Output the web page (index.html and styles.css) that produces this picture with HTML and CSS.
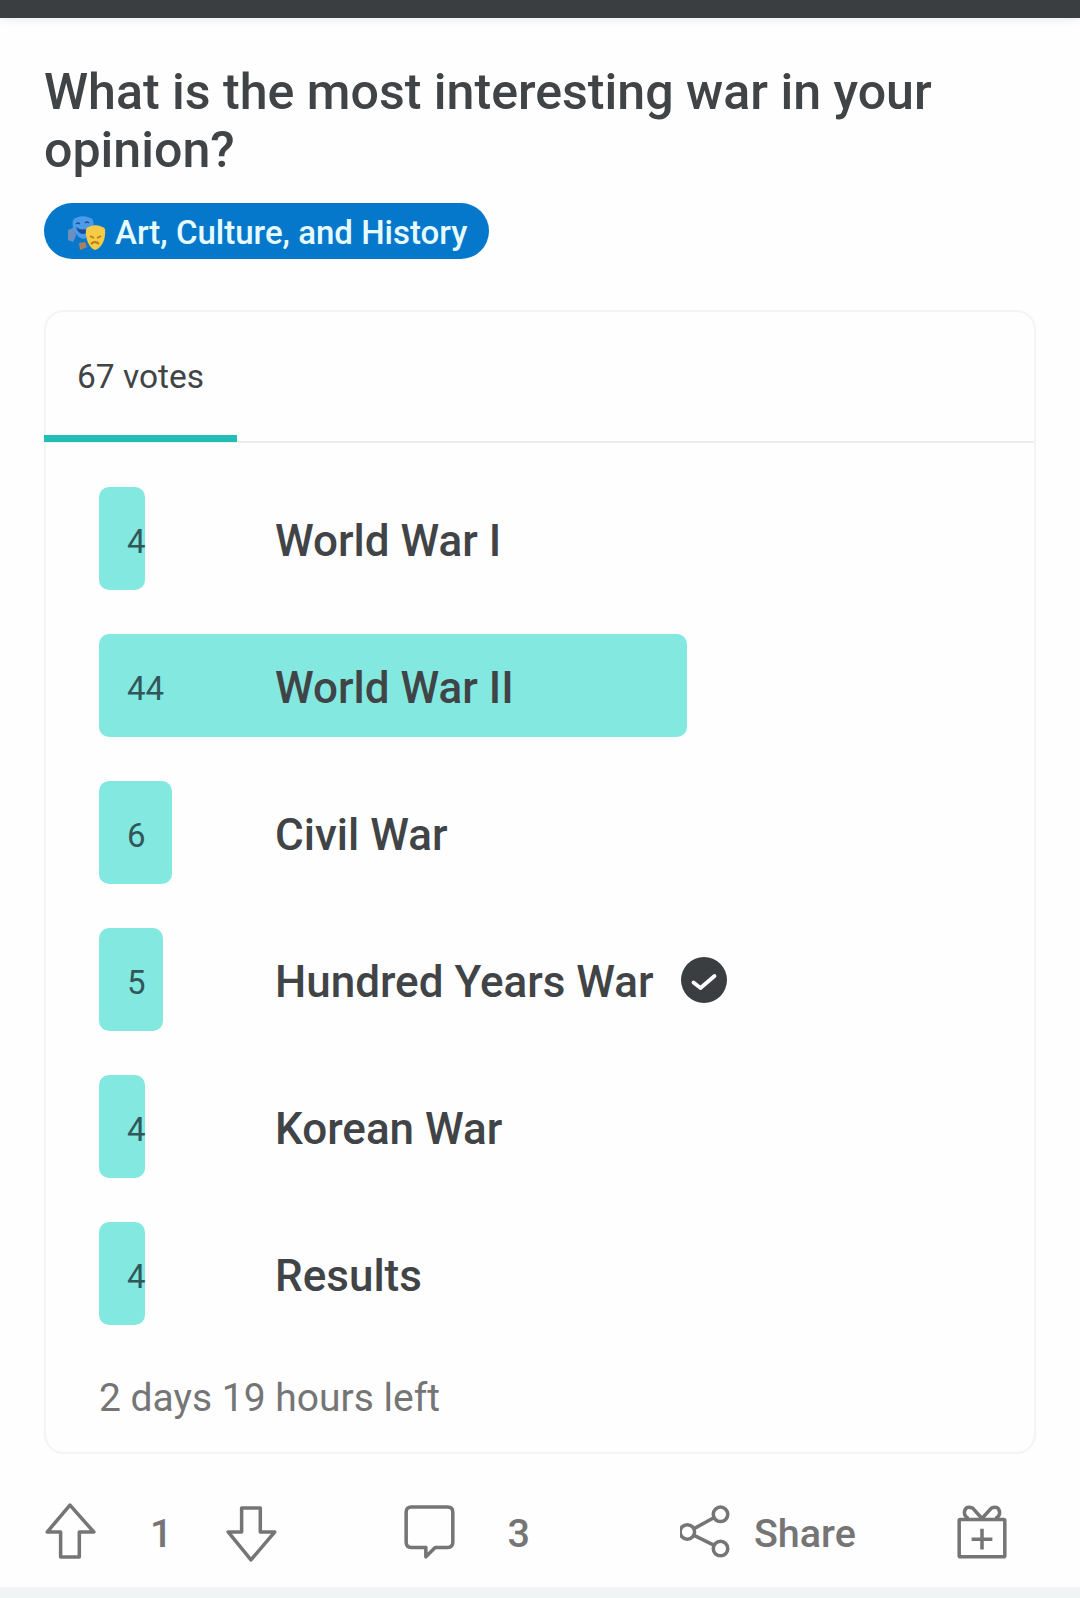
FILE: index.html
```html
<!DOCTYPE html>
<html lang="en">
<head>
    <meta charset="UTF-8">
    <meta name="viewport" content="width=device-width, initial-scale=1.0">
    <title>Poll</title>
    <link rel="stylesheet" href="styles.css">
</head>
<body>
    <div class="topBar"></div>
    <div class="content">
        <h1 class="title">What is the most interesting war in your opinion?</h1>
        <div class="topic">
            <svg class="topicIcon" viewBox="0 0 40 36" width="40" height="36">
                <path d="M1 15l7-3 1 9-3 6-5-2z" fill="#6d8fc0"/>
                <path d="M12 28l6-1 2 5-7 3z" fill="#a8825e"/>
                <path d="M6 5C11 0 21 0 26 5 28 13 24 22 16 24 9 22 4 13 6 5z" fill="#4c9be8"/>
                <path d="M9 9q2-2 4 0M18 8q2-2 4 0" fill="none" stroke="#1a4fa0" stroke-width="1.4"/>
                <path d="M9 12q7 5 14 0-1 7-7 7-5 0-7-7z" fill="#1a4fa0"/>
                <path d="M19 14C24 9 33 9 38 14 39 24 35 33 28 35 22 33 18 24 19 14z" fill="#f7cb45"/>
                <path d="M23 21l4 2M34 21l-4 2" stroke="#b07d18" stroke-width="1.5"/>
                <path d="M24 29q4-4 8 0" fill="none" stroke="#b07d18" stroke-width="1.8"/>
            </svg>
            <span class="topicText">Art, Culture, and History</span>
        </div>

        <div class="card">
            <div class="tabs">
                <div class="tab">67 votes</div>
            </div>
            <div class="options">
                <div class="option">
                    <div class="bar" style="width: 46px"></div>
                    <div class="count">4</div>
                    <div class="label">World War I</div>
                </div>
                <div class="option">
                    <div class="bar" style="width: 588px"></div>
                    <div class="count">44</div>
                    <div class="label">World War II</div>
                </div>
                <div class="option">
                    <div class="bar" style="width: 73px"></div>
                    <div class="count">6</div>
                    <div class="label">Civil War</div>
                </div>
                <div class="option">
                    <div class="bar" style="width: 64px"></div>
                    <div class="count">5</div>
                    <div class="label">Hundred Years War
                        <svg class="check" viewBox="0 0 46 46" width="46" height="46">
                            <circle cx="23" cy="23" r="23" fill="#3a3e41"/>
                            <path d="M12.5 25.5L19.5 31 33.5 19" fill="none" stroke="#fff" stroke-width="3.8" stroke-linecap="round" stroke-linejoin="round"/>
                        </svg>
                    </div>
                </div>
                <div class="option">
                    <div class="bar" style="width: 46px"></div>
                    <div class="count">4</div>
                    <div class="label">Korean War</div>
                </div>
                <div class="option">
                    <div class="bar" style="width: 46px"></div>
                    <div class="count">4</div>
                    <div class="label">Results</div>
                </div>
            </div>
            <div class="timeLeft">2 days 19 hours left</div>
        </div>

        <div class="actions">
            <svg class="icon iconUp" viewBox="0 0 50 54" width="52" height="56">
                <path d="M24 2L47 28H33V52H15V28H2z"/>
            </svg>
            <span class="num numUp">1</span>
            <svg class="icon iconDown" viewBox="0 0 50 54" width="52" height="56">
                <path d="M15 2H33V25H47L24 52 2 25H15z"/>
            </svg>
            <svg class="icon iconComment" viewBox="0 0 50 54" width="52" height="56">
                <path d="M7 2H42Q47 2 47 7V36Q47 41 42 41H30L21 50V41H7Q2 41 2 36V7Q2 2 7 2z"/>
            </svg>
            <span class="num numComment">3</span>
            <svg class="icon iconShare" viewBox="0 0 50 54" width="52" height="56">
                <circle cx="39" cy="9" r="7"/>
                <circle cx="7" cy="26" r="7"/>
                <circle cx="39" cy="42" r="7"/>
                <path d="M13 23L33 12M13 29L33 39"/>
            </svg>
            <span class="num shareText">Share</span>
            <svg class="icon iconGift" viewBox="0 0 50 54" width="52" height="56">
                <path d="M4 14H46Q47 14 47 15V49Q47 50 46 50H4Q3 50 3 49V15Q3 14 4 14z"/>
                <path d="M25 13L16 3Q9 0 8 7 8 11 12 13M25 13L34 3Q41 0 42 7 42 11 38 13"/>
                <path d="M25 23V43M15 33H35"/>
            </svg>
        </div>
    </div>
    <div class="bottomBand"></div>
</body>
</html>
```

FILE: styles.css
```css
*
{
    box-sizing: border-box;
}
html, body
{
    margin: 0;
    height: 1598px;
    overflow: hidden;
}
body
{
    display: flex;
    flex-direction: column;
    background: #fefefe;
    font-family: Roboto, "Noto Sans", sans-serif;
    color: #414446;
}
.topBar
{
    height: 18px;
    background: #3a3e41;
    box-shadow: 0 2px 8px rgba(0,0,0,0.08);
    flex-shrink: 0;
}
.content
{
    flex: 1;
    padding: 45px 44px 0 44px;
}
.title
{
    margin: 0;
    font-size: 50.1px;
    line-height: 58px;
    font-weight: 500;
}
.topic
{
    display: inline-flex;
    align-items: center;
    gap: 8px;
    height: 56px;
    margin-top: 24px;
    padding: 0 22px 0 23px;
    border-radius: 28px;
    background: #0678cc;
    color: #e6fbff;
    font-size: 33px;
    font-weight: 500;
}
.topicIcon
{
    flex-shrink: 0;
    margin-top: 4px;
}
.topicText
{
    padding-top: 2px;
}
.card
{
    width: 992px;
    height: 1144px;
    margin-top: 51px;
    border: 2px solid #f3f4f4;
    border-radius: 20px;
}
.tabs
{
    height: 131px;
    border-bottom: 2px solid #ebecec;
}
.tab
{
    width: 193px;
    height: 130px;
    margin-left: -2px;
    padding: 45px 0 0 33px;
    border-bottom: 7px solid #22bdb4;
    font-size: 33.5px;
}
.options
{
    display: flex;
    flex-direction: column;
    gap: 44px;
    padding: 44px 0 0 53px;
}
.option
{
    display: grid;
    grid-template-columns: 176px 1fr;
    align-items: center;
    height: 103px;
}
.bar
{
    grid-area: 1 / 1 / 2 / 3;
    height: 103px;
    background: #83e8e0;
    border-radius: 10px;
}
.count
{
    grid-area: 1 / 1;
    padding: 6px 0 0 28px;
    font-size: 33px;
    color: #31575a;
}
.label
{
    grid-area: 1 / 2;
    display: flex;
    align-items: center;
    gap: 27px;
    padding-top: 4px;
    font-size: 44px;
    font-weight: 500;
}
.check
{
    margin-top: -4px;
}
.timeLeft
{
    margin: 50px 0 0 53px;
    font-size: 39px;
    color: #757575;
}
.actions
{
    display: flex;
    align-items: center;
    height: 56px;
    margin-top: 49px;
    color: #757575;
}
.icon
{
    flex-shrink: 0;
    fill: none;
    stroke: #757575;
    stroke-width: 3.4;
    stroke-linejoin: round;
}
.num
{
    padding-top: 4px;
    font-size: 39.5px;
    font-weight: 500;
}
.iconUp
{
    margin-left: 1px;
}
.numUp
{
    margin-left: 53px;
}
.iconDown
{
    margin-left: 54px;
    margin-top: 6px;
}
.iconComment
{
    margin-left: 126px;
    margin-top: 4px;
}
.numComment
{
    margin-left: 51px;
}
.iconShare
{
    margin-left: 150px;
    margin-top: 4px;
}
.shareText
{
    margin-left: 22px;
}
.iconGift
{
    margin-left: 100px;
    margin-top: 4px;
}
.bottomBand
{
    height: 11px;
    background: #f1f4f5;
    flex-shrink: 0;
}
```
